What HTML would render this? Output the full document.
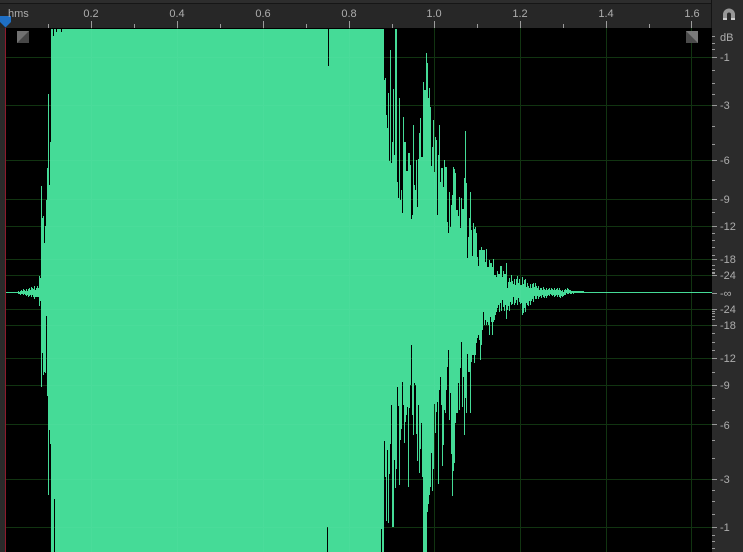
<!DOCTYPE html>
<html><head><meta charset="utf-8">
<style>
html,body{margin:0;padding:0;background:#000;width:743px;height:552px;overflow:hidden}
svg{display:block;position:absolute;left:0;top:0}
text{font-family:"Liberation Sans",sans-serif;fill:#adadad}
</style></head>
<body>
<svg id="s" width="743" height="552" viewBox="0 0 743 552" shape-rendering="crispEdges">
<rect width="743" height="552" fill="#000"/>
<rect x="0" y="0" width="743" height="28" fill="#272727"/>
<rect x="0" y="0" width="712" height="3" fill="#2d2d2d"/>
<rect x="0" y="3" width="712" height="1" fill="#161616"/>
<rect x="0" y="28" width="5" height="524" fill="#2a2a2a"/>
<rect x="712" y="0" width="31" height="552" fill="#2b2b2b"/>
<rect x="711" y="0" width="1" height="28" fill="#141414"/>
<path id="grid" fill="none" stroke="#0a2e0a" stroke-width="1" d=""/>
<path id="wave" fill="none" stroke="#45db97" stroke-width="1" d=""/>
<path id="over" fill="none" stroke="#fff" stroke-opacity=".03" stroke-width="1" d=""/>
<path id="rt" fill="none" stroke="#9c9c9c" stroke-width="1" d=""/>
<path id="tk" fill="none" stroke="#9a9a9a" stroke-width="1" d=""/>
<rect x="5" y="28" width="1" height="524" fill="#8e1a2c"/>
<path d="M0 16H11V22L5.5 27.5L0 22Z" fill="#1f6fc4" shape-rendering="auto"/>
<g shape-rendering="auto">
<rect x="17" y="31" width="12" height="12" fill="#717171"/>
<path d="M29 31V43H17Z" fill="#474747"/>
<rect x="686" y="31" width="12" height="12" fill="#7a7a7a"/>
<path d="M686 31L698 43H686Z" fill="#4b4b4b"/>
<path d="M725 20V14.5a4 4 0 0 1 8 0V20" fill="none" stroke="#989898" stroke-width="4"/>
<path d="M723 18h4v2h-4zM731 18h4v2h-4z" fill="#cfcfcf"/>
</g>
<g font-size="11" shape-rendering="auto">
<text x="8" y="17">hms</text>
<text x="91" y="17" text-anchor="middle">0.2</text>
<text x="177" y="17" text-anchor="middle">0.4</text>
<text x="263" y="17" text-anchor="middle">0.6</text>
<text x="349" y="17" text-anchor="middle">0.8</text>
<text x="434" y="17" text-anchor="middle">1.0</text>
<text x="520" y="17" text-anchor="middle">1.2</text>
<text x="606" y="17" text-anchor="middle">1.4</text>
<text x="692" y="17" text-anchor="middle">1.6</text>
</g>
<g font-size="11" shape-rendering="auto">
<text x="720" y="41">dB</text>
<text x="720" y="61">-1</text>
<text x="720" y="109">-3</text>
<text x="720" y="164">-6</text>
<text x="720" y="203">-9</text>
<text x="720" y="230">-12</text>
<text x="720" y="263">-18</text>
<text x="720" y="279">-24</text>
<text x="720" y="297">-∞</text>
<text x="720" y="313">-24</text>
<text x="720" y="329">-18</text>
<text x="720" y="362">-12</text>
<text x="720" y="389">-9</text>
<text x="720" y="429">-6</text>
<text x="720" y="483">-3</text>
<text x="720" y="531">-1</text>
</g>
</svg>
<script>
(function(){
var hs=[57,105,160,199,226,259,275,309,325,358,385,424,479,527];
var vs=[91,177,263,349,434,520,606,691];
var g='',o='';
hs.forEach(function(y){g+='M6 '+(y+.5)+'H712';o+='M6 '+(y+.5)+'H712';});
vs.forEach(function(x){g+='M'+(x+.5)+' 28V552';o+='M'+(x+.5)+' 28V552';});
document.getElementById('grid').setAttribute('d',g);
document.getElementById('over').setAttribute('d',o);

var top=[80,78,115,128,93,161,50,163,142,89,155,29,29,182,198,98,200,190,213,117,142,142,171,171,153,153,165,219,215,125,185,190,160,207,159,133,118,157,157,82,90,90,53,63,98,88,107,166,147,120,172,137,140,215,155,125,182,168,168,187,160,167,167,222,233,192,227,205,195,167,169,173,210,210,216,197,228,198,209,209,178,131,183,258,237,218,192,230,256,223,229,227,233,257,266,250,250,247,250,250,250,262,249,267,267,260,263,263,267,259,275,275,277,271,274,274];
var bot=[441,477,521,450,523,474,444,405,527,527,460,488,469,387,406,485,440,429,382,405,443,422,415,407,487,408,385,345,415,435,383,385,434,461,405,473,449,423,477,552,552,552,552,512,504,495,487,453,491,469,404,433,412,402,484,390,377,405,466,445,410,413,390,367,350,420,393,454,496,471,463,423,413,413,383,410,368,342,407,377,435,398,413,354,372,372,413,362,355,355,363,355,343,338,335,340,360,345,330,312,325,320,325,322,325,335,317,322,335,322,320,315,312,308,305,312];
function ip(k,x){for(var i=0;i<k.length-1;i++){if(x>=k[i][0]&&x<=k[i+1][0]){var a=k[i],b=k[i+1];return a[1]+(b[1]-a[1])*(x-a[0])/(b[0]-a[0]);}}return k[k.length-1][1];}
var tk=[[500,266],[503,277],[506,267],[507,283],[510,279],[513,282],[517,278],[520,285],[523,277],[527,287],[532,284],[537,287],[542,289],[550,289],[557,289],[562,291],[567,289],[573,291],[580,291],[587,292],[600,292]];
var bk=[[500,307],[503,307],[506,310],[510,308],[513,299],[515,303],[520,302],[523,313],[527,305],[530,302],[533,300],[537,297],[543,297],[552,295],[560,297],[567,294],[577,293],[600,293]];
var lt=[[6,292],[17,292],[18,291],[25,290],[30,289],[35,287],[36,288],[37,287],[38,287],[39,281],[40,278]];
var lb=[[6,293],[17,293],[18,294],[25,295],[30,296],[35,298],[36,295],[37,297],[38,298],[39,303],[40,308]];
var jit=[0,1,-1,2,0,-1,1,-2];
var d='';
function col(x,t,b){d+='M'+(x+.5)+' '+t+'V'+b;}
for(var x=6;x<=40;x++){var t=ip(lt,x),b=ip(lb,x),a=(b-t)/8,j=jit[x%8]*a;col(x,Math.round(t+j),Math.round(b-jit[(x+3)%8]*a));}
col(41,186,387);col(42,218,353);col(43,216,375);col(44,243,372);col(45,226,373);col(46,200,316);col(47,168,396);col(48,94,495);col(49,185,430);col(50,142,444);
for(x=51;x<=383;x++){
 var t2=29,b2=552;
 if(x==53)t2=36; if(x==56||x==61)t2=32; if(x==328)t2=66;
 if(x==54)b2=499; if(x==327)b2=527; if(x==381)b2=529;
 col(x,t2,b2);
}
for(x=384;x<500;x++){col(x,top[x-384],bot[x-384]);}
for(x=500;x<=600;x++){var t3=ip(tk,x),b3=ip(bk,x),a3=(b3-t3)/10;col(x,Math.round(t3+jit[x%8]*a3),Math.round(b3-jit[(x+5)%8]*a3));}
d+='M6 292.5H712';
document.getElementById('wave').setAttribute('d',d);

var r='';
vs.forEach(function(x){r+='M'+(x+.5)+' 21V28';});
[48,134,220,306,392,477,563,649].forEach(function(x){r+='M'+(x+.5)+' 24V28';});
document.getElementById('rt').setAttribute('d',r);

var t4='';
[57,105,160,199,226,259,275,293,309,325,358,385,424,479,527].forEach(function(y){t4+='M712 '+(y+.5)+'H717';});
[36,43,49,70,83,94,126,144,180,212,233,240,247,255,265,269,272,273,311,313,316,319,333,342,350,372,398,410,440,458,490,501,514,535,541,548].forEach(function(y){t4+='M712 '+(y+.5)+'H715';});
document.getElementById('tk').setAttribute('d',t4);
})();
</script>
</body></html>
